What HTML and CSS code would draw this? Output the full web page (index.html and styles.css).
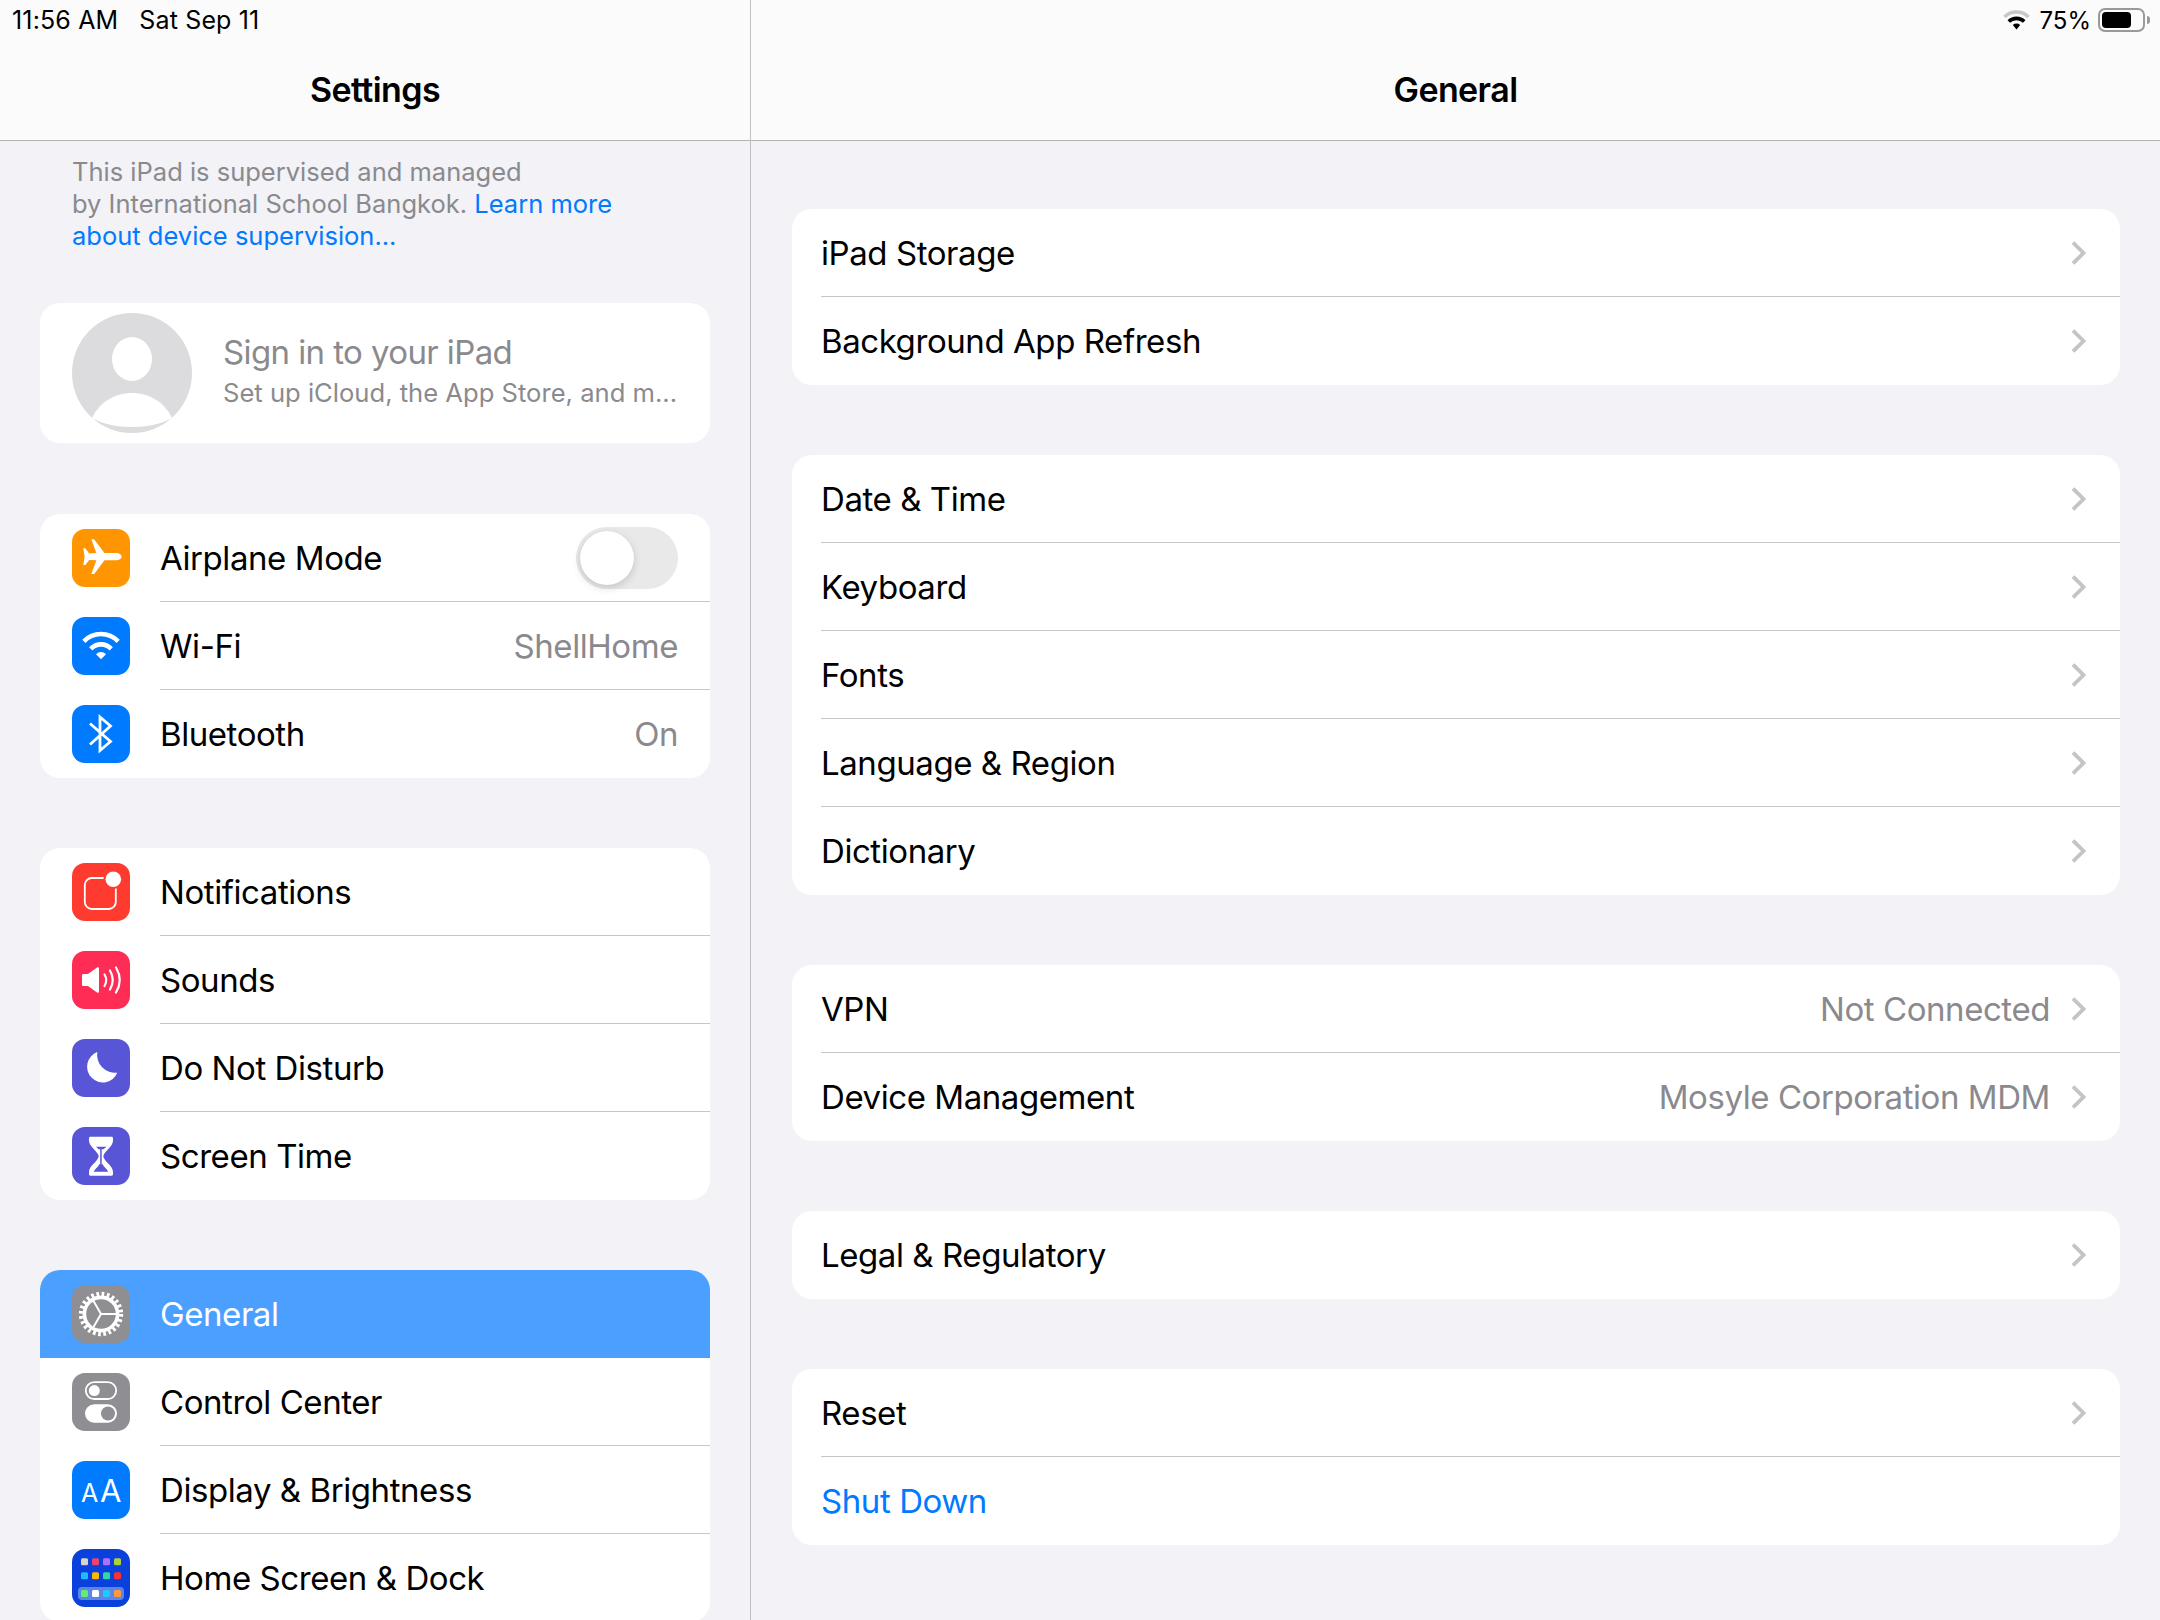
FILE: index.html
```html
<!DOCTYPE html>
<html lang="en">
<head>
<meta charset="utf-8">
<title>Settings</title>
<link rel="stylesheet" href="styles.css">
</head>
<body>
<svg class="defs" aria-hidden="true"><defs><symbol id="chev" viewBox="0 0 14 24"><path d="M1 1.500L11.500 12 1 22.500" fill="none" stroke="#c4c4c7" stroke-width="3.800"/></symbol></defs></svg>
<div class="app">
  <aside class="sidebar">
    <header class="bar">
      <div class="status"><span>11:56 AM</span><span>Sat Sep 11</span></div>
      <h1 class="title">Settings</h1>
    </header>
    <div class="side-body">
      <p class="note">This iPad is supervised and managed<br>by International School Bangkok. <a class="link">Learn more<br>about device supervision...</a></p>
      <section class="card sign">
        <svg class="avatar" viewBox="0 0 120 120"><circle cx="60" cy="60" r="60" fill="#dcdcde"/><ellipse cx="60" cy="46" rx="20" ry="22" fill="#fff"/><path d="M20 105C28 88 44 80 60 80s32 8 40 25c-10 6-25 9-40 9s-30-3-40-9z" fill="#fff"/></svg>
        <div class="sign-text"><div class="sign-title">Sign in to your iPad</div><div class="sign-sub">Set up iCloud, the App Store, and m...</div></div>
      </section>

      <section class="card">
        <div class="row"><svg class="ico orange" viewBox="0 0 58 58"><path transform="translate(0 27.7)" fill="#fff" d="M49.7 0c0-2-3-3.6-6-3.6H32.5L22.6-16.8c-.3-.4-.7-.6-1.2-.6h-2.1L24.4-3.6l-7.2.4-3.6-4.8c-.2-.3-.5-.4-.8-.4h-1.5L12.600 0l-1.300 8.400h1.500c.3 0 .6-.1.8-.4l3.600-4.800 7.200.4-5.100 13.800h2.100c.5 0 .9-.2 1.200-.6L32.500 3.600h11.200c3 0 6-1.600 6-3.600z"/></svg>
          <div class="body"><span class="label">Airplane Mode</span><span class="toggle"><span class="knob"></span></span></div></div>
        <div class="row"><svg class="ico blue" viewBox="0 0 58 58"><g fill="none" stroke="#fff" stroke-width="4.600"><path d="M11.800 24.300a24 24 0 0 1 34.400 0"/><path d="M18.800 31.800a14 14 0 0 1 20.400 0"/></g><path fill="#fff" d="M24 37.200a7 7 0 0 1 10 0L29 42.300z"/></svg>
          <div class="body"><span class="label">Wi-Fi</span><span class="value">ShellHome</span></div></div>
        <div class="row last"><svg class="ico blue" viewBox="0 0 58 58"><path fill="none" stroke="#fff" stroke-width="2.800" d="M18 18.500l20.500 18L28 45.500v-33.500L38.500 21 18 39.500"/></svg>
          <div class="body"><span class="label">Bluetooth</span><span class="value">On</span></div></div>
      </section>

      <section class="card">
        <div class="row"><svg class="ico red" viewBox="0 0 58 58"><rect x="12.800" y="15" width="31" height="31" rx="7" fill="none" stroke="#fff" stroke-width="1.800"/><circle cx="41.300" cy="16.300" r="10" fill="#ff3b30"/><circle cx="41.300" cy="16.300" r="7.800" fill="#fff"/></svg>
          <div class="body"><span class="label">Notifications</span></div></div>
        <div class="row"><svg class="ico pink" viewBox="0 0 58 58"><path fill="#fff" d="M11.500 23H16l9-6.500c1-.7 2-.2 2 1v23c0 1.200-1 1.700-2 1L16 35h-4.500c-1 0-1.500-.5-1.500-1.500v-9c0-1 .5-1.500 1.500-1.500z"/><g fill="none" stroke="#fff" stroke-width="2.200" stroke-linecap="round"><path d="M32.500 23.500q3.500 5.700 0 11.500"/><path d="M38 19.500q5.500 9.500 0 19"/><path d="M44 16.500q7.500 12.500 0 25"/></g></svg>
          <div class="body"><span class="label">Sounds</span></div></div>
        <div class="row"><svg class="ico indigo" viewBox="0 0 58 58"><path fill="#fff" d="M25.300 13A15.700 15.700 0 1 0 45.300 33.700 18 18 0 0 1 25.300 13z"/></svg>
          <div class="body"><span class="label">Do Not Disturb</span></div></div>
        <div class="row last"><svg class="ico indigo" viewBox="0 0 58 58"><path fill="#fff" d="M18.500 9.700h21c1 0 1.500.7 1.500 1.700v2c0 6-7 9-9.500 14.800v2c2.500 5.800 9.500 8.800 9.500 14.800v2c0 1-.5 1.700-1.500 1.700h-21c-1 0-1.500-.7-1.500-1.700v-2c0-6 7-9 9.500-14.800v-2C24 22.400 17 19.400 17 13.400v-2c0-1 .5-1.700 1.500-1.700z"/><path fill="#5856d6" d="M24 19.700h10.500l-3 2.500h-1.800v15h1c1 3 3.800 4 5.600 7.500H21.600c1.800-3.500 4.600-4.500 5.600-7.500h1v-15h-1.600z"/></svg>
          <div class="body"><span class="label">Screen Time</span></div></div>
      </section>

      <section class="card">
        <div class="row selected"><svg class="ico gray" viewBox="0 0 58 58"><g fill="none" stroke="#fff"><circle cx="29" cy="29" r="20" stroke-width="4.400" stroke-dasharray="2.700 2.536"/><circle cx="29" cy="29" r="16.600" stroke-width="3.600"/><path stroke-width="2" d="M29 29h15M29 29l-7.500-13M29 29l-7.500 13"/></g></svg>
          <div class="body"><span class="label">General</span></div></div>
        <div class="row"><svg class="ico gray" viewBox="0 0 58 58"><rect x="13.800" y="9.200" width="30.400" height="16.800" rx="8.400" fill="none" stroke="#fff" stroke-width="1.800"/><circle cx="22.300" cy="17.600" r="5.500" fill="#fff"/><rect x="13" y="31.300" width="32" height="18.400" rx="9.200" fill="#fff"/><circle cx="36" cy="40.500" r="7" fill="#8e8e93"/></svg>
          <div class="body"><span class="label">Control Center</span></div></div>
        <div class="row"><svg class="ico blue" viewBox="0 0 58 58"><text class="aa-small" x="9" y="40.800">A</text><text class="aa-big" x="28" y="40.800">A</text></svg>
          <div class="body"><span class="label">Display &amp; Brightness</span></div></div>
        <div class="row"><svg class="ico navy" viewBox="0 0 58 58"><rect x="6" y="38" width="46" height="13" rx="4" fill="#5e85e4"/><g><rect x="9" y="9.300" width="7" height="7" rx="1.500" fill="#d8d4c6"/><rect x="20" y="9.300" width="7" height="7" rx="1.500" fill="#f2426a"/><rect x="31" y="9.300" width="7" height="7" rx="1.500" fill="#b070ff"/><rect x="42" y="9.300" width="7" height="7" rx="1.500" fill="#b2d234"/><rect x="9" y="23.300" width="7" height="7" rx="1.500" fill="#1cbcff"/><rect x="20" y="23.300" width="7" height="7" rx="1.500" fill="#ffb800"/><rect x="31" y="23.300" width="7" height="7" rx="1.500" fill="#30d8a0"/><rect x="42" y="23.300" width="7" height="7" rx="1.500" fill="#ff3030"/><rect x="9" y="41" width="7" height="7" rx="1.500" fill="#60f070"/><rect x="20" y="41" width="7" height="7" rx="1.500" fill="#fff"/><rect x="31" y="41" width="7" height="7" rx="1.500" fill="#20c8ff"/><rect x="42" y="41" width="7" height="7" rx="1.500" fill="#ff9a3a"/></g></svg>
          <div class="body"><span class="label">Home Screen &amp; Dock</span></div></div>
      </section>
    </div>
  </aside>

  <main class="detail">
    <header class="bar">
      <div class="status status-right">
        <svg class="st-wifi" viewBox="0 0 27 20"><g fill="none" stroke-width="3.600"><path stroke="#c8c8c8" d="M1.500 7a17 17 0 0 1 24 0"/><path stroke="#000" d="M5.800 11.500a11 11 0 0 1 15.400 0"/></g><path fill="#000" d="M9.800 15a5.500 5.500 0 0 1 7.400 0L13.500 19.500z"/></svg>
        <span class="pct">75%</span>
        <span class="battery"><span class="fill"></span></span><span class="nub"></span>
      </div>
      <h1 class="title">General</h1>
    </header>
    <div class="detail-body">
      <section class="card">
        <div class="drow"><div class="body"><span class="label">iPad Storage</span><svg class="chev"><use href="#chev"/></svg></div></div>
        <div class="drow last"><div class="body"><span class="label">Background App Refresh</span><svg class="chev"><use href="#chev"/></svg></div></div>
      </section>
      <section class="card">
        <div class="drow"><div class="body"><span class="label">Date &amp; Time</span><svg class="chev"><use href="#chev"/></svg></div></div>
        <div class="drow"><div class="body"><span class="label">Keyboard</span><svg class="chev"><use href="#chev"/></svg></div></div>
        <div class="drow"><div class="body"><span class="label">Fonts</span><svg class="chev"><use href="#chev"/></svg></div></div>
        <div class="drow"><div class="body"><span class="label">Language &amp; Region</span><svg class="chev"><use href="#chev"/></svg></div></div>
        <div class="drow last"><div class="body"><span class="label">Dictionary</span><svg class="chev"><use href="#chev"/></svg></div></div>
      </section>
      <section class="card">
        <div class="drow"><div class="body"><span class="label">VPN</span><span class="value">Not Connected</span><svg class="chev"><use href="#chev"/></svg></div></div>
        <div class="drow last"><div class="body"><span class="label">Device Management</span><span class="value">Mosyle Corporation MDM</span><svg class="chev"><use href="#chev"/></svg></div></div>
      </section>
      <section class="card">
        <div class="drow last"><div class="body"><span class="label">Legal &amp; Regulatory</span><svg class="chev"><use href="#chev"/></svg></div></div>
      </section>
      <section class="card">
        <div class="drow"><div class="body"><span class="label">Reset</span><svg class="chev"><use href="#chev"/></svg></div></div>
        <div class="drow last"><div class="body"><span class="label link">Shut Down</span></div></div>
      </section>
    </div>
  </main>
</div>
</body>
</html>
```

FILE: styles.css
```css
* { box-sizing: border-box; }
html, body { margin: 0; height: 100%; }
body {
  background: #f2f2f7;
  color: #000;
  font-family: Inter, "Liberation Sans", sans-serif;
  overflow: hidden;
}
.defs { display: none; }
.app { display: flex; height: 1620px; overflow: hidden; }
.sidebar { flex: 0 0 751px; border-right: 1px solid #c0c0c2; height: 100%; overflow: hidden; }
.detail { flex: 1; min-width: 0; height: 100%; }

.bar { height: 141px; background: #fbfbfc; border-bottom: 1px solid #b4b4b6; }
.status { height: 40px; padding: 0 12px; display: flex; align-items: center; gap: 21px; font-size: 25px; letter-spacing: 0.15px; }
.status-right { justify-content: flex-end; gap: 0; padding: 0 10px 0 0; }
.st-wifi { width: 27px; height: 20px; margin-right: 9px; }
.pct { margin-right: 7px; font-size: 24px; letter-spacing: 0; }
.battery { width: 47px; height: 24px; border: 2px solid #9a9a9a; border-radius: 7px; padding: 2px; display: block; }
.fill { display: block; width: 29px; height: 16px; background: #000; border-radius: 4px; }
.nub { width: 3px; height: 8px; margin-left: 2px; background: #9a9a9a; border-radius: 0 3px 3px 0; }
.title { margin: 0; height: 100px; line-height: 100px; text-align: center; font-size: 34px; font-weight: 600; letter-spacing: -0.6px; }

.side-body { padding: 15px 40px 0 40px; }
.note { margin: 0 0 51px; padding: 0 32px; font-size: 25.5px; line-height: 32px; color: #8a8a8e; }
.link { color: #007aff; }

.card { background: #fff; border-radius: 20px; overflow: hidden; margin-bottom: 70px; }
.sign { height: 140px; display: flex; align-items: center; padding-left: 32px; gap: 31px; margin-bottom: 71px; }
.avatar { width: 120px; height: 120px; flex: none; }
.sign-title { font-size: 33px; line-height: 42px; color: #8a8a8e; letter-spacing: -0.6px; margin-top: -2px; }
.sign-sub { font-size: 25.6px; line-height: 40px; color: #8a8a8e; white-space: nowrap; }

.row { height: 88px; display: flex; align-items: stretch; padding-left: 32px; gap: 30px; }
.ico { width: 58px; height: 58px; flex: none; align-self: center; border-radius: 13px; }
.orange { background: #ff9500; }
.blue { background: #007aff; }
.red { background: #ff3b30; }
.pink { background: #ff2d55; }
.indigo { background: #5856d6; }
.gray { background: #8e8e93; }
.navy { background: #0a40dc; }
.aa-small { fill: #fff; font-family: Inter, sans-serif; font-size: 25px; }
.aa-big { fill: #fff; font-family: Inter, sans-serif; font-size: 31px; }

.body { flex: 1; min-width: 0; display: flex; align-items: center; justify-content: space-between; border-bottom: 1px solid #c6c6c8; padding-right: 32px; height: 88px; }
.last .body { border-bottom: 0; }
.selected { background: #4a9fff; }
.selected .body { border-bottom: 0; }
.selected .label { color: #fff; }
.label { font-size: 33px; letter-spacing: -0.43px; white-space: nowrap; }
.label.link { color: #007aff; }
.value { font-size: 33px; letter-spacing: -0.43px; color: #8a8a8e; white-space: nowrap; }

.toggle { width: 102px; height: 62px; border-radius: 31px; background: #e9e9ea; padding: 4px; display: block; }
.knob { display: block; width: 54px; height: 54px; border-radius: 50%; background: #fff; box-shadow: 0 3px 8px rgba(0,0,0,.15), 0 0 1px rgba(0,0,0,.1); }

.detail-body { padding: 68px 40px 0 41px; }
.drow { height: 88px; padding-left: 29px; display: flex; }
.drow .body { padding-right: 34px; }
.drow .value { margin-left: auto; margin-right: 22px; }
.chev { width: 14px; height: 24px; flex: none; overflow: visible; }
```
